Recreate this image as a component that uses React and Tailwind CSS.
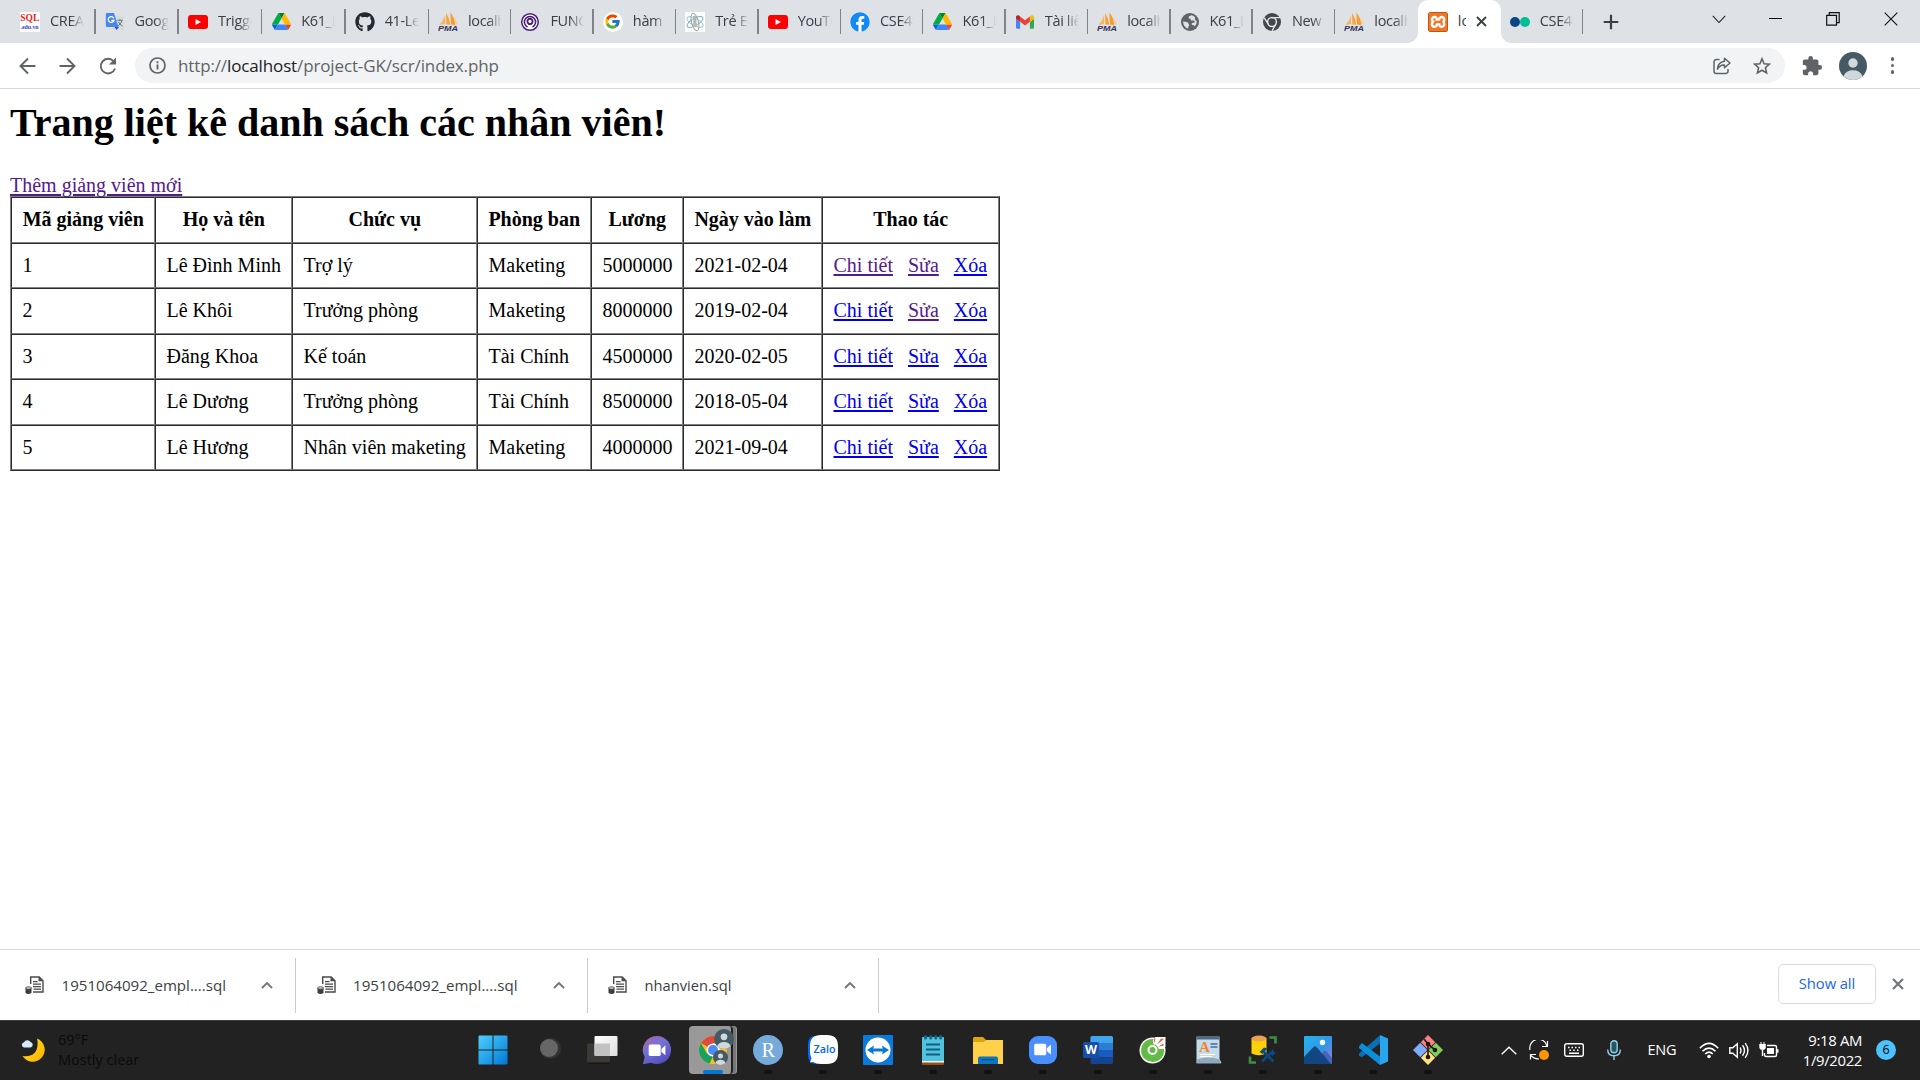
import React from "react";
import { FaYoutube, FaGithub, FaFacebook } from "react-icons/fa";
import { FcGoogle } from "react-icons/fc";
import { SiXampp } from "react-icons/si";

const Drive = () => (
  <svg className="h-[17px] w-[19px]" viewBox="0 0 87.3 78">
    <path d="m6.6 66.85 3.85 6.65c.8 1.4 1.95 2.5 3.3 3.3l13.75-23.8h-27.5c0 1.55.4 3.1 1.2 4.5z" fill="#0066da" />
    <path d="m43.65 25-13.75-23.8c-1.35.8-2.5 1.9-3.3 3.3l-25.4 44a9.06 9.06 0 0 0 -1.2 4.5h27.5z" fill="#00ac47" />
    <path d="m73.55 76.8c1.35-.8 2.5-1.9 3.3-3.3l1.6-2.75 7.65-13.25c.8-1.4 1.2-2.95 1.2-4.5h-27.5l5.85 11.5z" fill="#ea4335" />
    <path d="m43.65 25 13.75-23.8c-1.35-.8-2.9-1.2-4.5-1.2h-18.5c-1.6 0-3.15.45-4.5 1.2z" fill="#00832d" />
    <path d="m59.8 53h-32.3l-13.75 23.8c1.35.8 2.9 1.2 4.5 1.2h50.8c1.6 0 3.15-.45 4.5-1.2z" fill="#4285f4" />
    <path d="m73.4 26.5-12.7-22c-.8-1.4-1.95-2.5-3.3-3.3l-13.75 23.8 16.15 28h27.45c0-1.55-.4-3.1-1.2-4.5z" fill="#ffba00" />
  </svg>
);

const Youtube = () => (
  <span className="relative flex h-[14px] w-5 items-center justify-center rounded-[3px] bg-[#ff0000]">
    <svg className="h-[6px] w-[6px]" viewBox="0 0 6 6"><path d="M.5 0 6 3 .5 6z" fill="#fff" /></svg>
  </span>
);

const Pma = () => (
  <svg className="h-5 w-5" viewBox="0 0 20 20">
    <path d="M7 2.500Q6 8 1.500 13l5.700-1z" fill="#fbb45c" />
    <path d="M8 .8Q11.500 6 12.200 12.800l-3.700-.3z" fill="#f9a133" />
    <path d="M12.300.5Q17 6 17.200 13.200l-4.200-.6z" fill="#f89b2b" />
    <path d="M15.500 4.500q3 4 4 7.500l-1.700.8z" fill="#fbc98a" />
    <text x="0" y="19.400" textLength="20" lengthAdjust="spacingAndGlyphs" fontFamily="Liberation Sans" fontStyle="italic" fontWeight="700" fontSize="7.600" fill="#34345e">PMA</text>
  </svg>
);

const SqlFav = () => (
  <span className="flex h-5 w-5 flex-col items-center overflow-hidden bg-white">
    <svg className="h-5 w-5" viewBox="0 0 20 20">
      <text x="0.3" y="9" textLength="19" lengthAdjust="spacingAndGlyphs" fontFamily="Liberation Serif" fontWeight="700" fontSize="10" fill="#ec1c24">SQL</text>
      <text x="0.5" y="16.500" textLength="18" lengthAdjust="spacingAndGlyphs" fontFamily="Liberation Serif" fontWeight="700" fontSize="6" fill="#3b3bd0">.edu.vn</text>
    </svg>
  </span>
);

const Translate = () => (
  <svg className="h-5 w-5" viewBox="0 0 20 20">
    <rect x="7.500" y="4" width="11.500" height="14" rx="1" fill="#d9dadb" />
    <path d="M9.500 15h4.500l-2.500 3z" fill="#1f57c3" />
    <path d="M2 1h7l4.500 14H2a1.200 1.200 0 0 1-1.200-1.200V2.200A1.200 1.200 0 0 1 2 1z" fill="#4688f1" />
    <path d="M8.800 6.200A2.900 2.900 0 1 0 9 8.300H6.400" fill="none" stroke="#fff" strokeWidth="1.300" />
    <path d="M12.300 8.300h5.500M15 7v1.300M17 8.500q-1 3.500-4 5.500M13.300 9.800q1.500 3 4.200 4.300" fill="none" stroke="#607988" strokeWidth="1" />
  </svg>
);

const Func = () => (
  <svg className="h-5 w-5" viewBox="0 0 20 20" fill="none">
    <circle cx="10" cy="10" r="9" fill="#fff" />
    <circle cx="10" cy="10" r="8.300" stroke="#4b1e78" strokeWidth="1.500" />
    <path d="M7.500 15a5.600 5.600 0 1 1 5 0" stroke="#4b1e78" strokeWidth="1.500" />
    <path d="M9 13v-1.300a2.600 2.600 0 1 1 2 0V13" stroke="#4b1e78" strokeWidth="1.900" />
  </svg>
);

const Atom = () => (
  <svg className="h-5 w-5 bg-white" viewBox="0 0 20 20" fill="none">
    <ellipse cx="10" cy="10" rx="9" ry="3.600" stroke="#9fc3cb" transform="rotate(28 10 10)" />
    <ellipse cx="10" cy="10" rx="9" ry="3.600" stroke="#7fb0bd" transform="rotate(-30 10 10)" />
    <ellipse cx="10" cy="10" rx="9" ry="3.400" stroke="#8fa9b0" transform="rotate(75 10 10)" />
    <path d="M8 4h3l1 11H8.500z" fill="#b9b6b2" />
  </svg>
);

const Gmail = () => (
  <svg className="h-[14px] w-[18px]" viewBox="52 42 88 66">
    <path fill="#4285f4" d="M58 108h14V74L52 59v43c0 3.32 2.69 6 6 6" />
    <path fill="#34a853" d="M120 108h14c3.32 0 6-2.69 6-6V59l-20 15" />
    <path fill="#fbbc04" d="M120 48v26l20-15v-8c0-7.42-8.47-11.65-14.4-7.2" />
    <path fill="#ea4335" d="M72 74V48l24 18 24-18v26L96 92" />
    <path fill="#c5221f" d="M52 51v8l20 15V48l-5.6-4.2c-5.94-4.45-14.4-.22-14.4 7.2" />
  </svg>
);

const Globe = () => (
  <svg className="h-[18px] w-[18px]" viewBox="0 0 18 18">
    <circle cx="9" cy="9" r="9" fill="#5f6368" />
    <path d="M2.2 8.2 7 9.6l1.3 2.7-1 1.2v2.3A7 7 0 0 1 2.2 8.200z" fill="#dee1e6" />
    <path d="M10.500 2.300 8 3.200l-.6 2 2 .5.6 1.900h2.700l1.200 1.200-.9 1-2.300.3.2 1.800 2.300.3.300 1.500A7 7 0 0 0 15.800 8l-1.300-.6-.7-2 .5-.8a7 7 0 0 0-3.800-2.300z" fill="#dee1e6" />
  </svg>
);

const ChromeMono = () => (
  <svg className="h-[18px] w-[18px]" viewBox="0 0 18 18">
    <circle cx="9" cy="9" r="9" fill="#43474b" />
    <circle cx="9" cy="9" r="4.400" fill="none" stroke="#dee1e6" strokeWidth="1.500" />
    <path d="M9 4.600H17M5.200 11.200 1.300 4.800M12.800 11.200 9 18" stroke="#dee1e6" strokeWidth="1.400" />
  </svg>
);

const Xampp = () => (
  <span className="flex h-5 w-5 items-center justify-center overflow-hidden rounded-[2px] border border-[#b85a14] bg-white">
    <SiXampp className="h-5 w-5 shrink-0 text-[#f37623]" />
  </span>
);

const TwoDots = () => (
  <span className="flex w-5"><i className="h-[10px] w-[10px] rounded-full bg-[#0a4586]" /><i className="h-[10px] w-[10px] rounded-full bg-[#00bf96]" /></span>
);

const GoogleFav = () => (
  <span className="flex h-5 w-5 items-center justify-center rounded-full bg-white"><FcGoogle className="h-[17px] w-[17px]" /></span>
);
const Github = () => <FaGithub className="h-5 w-5 text-[#24292f]" />;
const Facebook = () => (
  <span className="flex h-5 w-5 rounded-full bg-white"><FaFacebook className="h-5 w-5 text-[#1289f4]" /></span>
);

const tabs = [
  [SqlFav, "CREAT"], [Translate, "Goog"], [Youtube, "Trigge"], [Drive, "K61_D"], [Github, "41-Le"],
  [Pma, "localh"], [Func, "FUNC"], [GoogleFav, "hàm"], [Atom, "Trẻ Em"], [Youtube, "YouTu"],
  [Facebook, "CSE48"], [Drive, "K61_D"], [Gmail, "Tài liệ"], [Pma, "localh"], [Globe, "K61_D"],
  [ChromeMono, "New"], [Pma, "localh"],
];

const FADE = "w-[34px] overflow-hidden whitespace-nowrap text-[14.500px] tracking-[-0.350px] text-[#3c4043] [mask-image:linear-gradient(90deg,#000_60%,transparent)]";

function Tab({ Icon, label, width = "w-[82.400px]", line = true }) {
  return (
    <div className={`flex h-full shrink-0 items-center ${width}`}>
      <span className="ml-[9px] flex w-5 shrink-0 justify-center"><Icon /></span>
      <span className={`ml-[10px] pb-[2px] ${FADE}`}>{label}</span>
      {line && <i className="ml-auto h-[25px] w-[1.500px] bg-[#808387]" />}
    </div>
  );
}

function TabBar() {
  return (
    <div className="flex h-[43px] shrink-0 items-center bg-[#dee1e6] pl-[11px]">
      {tabs.map(([Icon, label], i) => (
        <Tab key={i} Icon={Icon} label={label} width={i === 0 ? "w-[84.500px]" : i < 5 ? "w-[83.400px]" : "w-[82.400px]"} line={i !== 16} />
      ))}
      <div className="relative flex h-full w-[83px] shrink-0 items-center rounded-t-[10px] bg-white pl-[10px]">
        <i className="absolute bottom-0 -left-[10px] h-[10px] w-[10px] bg-[radial-gradient(circle_at_0_0,transparent_9.500px,white_10px)]" />
        <i className="absolute -right-[10px] bottom-0 h-[10px] w-[10px] bg-[radial-gradient(circle_at_100%_0,transparent_9.500px,white_10px)]" />
        <Xampp />
        <span className="ml-[10px] w-[8px] overflow-hidden pb-[2px] text-[14.500px] text-[#3c4043]">lo</span>
        <svg className="ml-[10px] h-[11px] w-[11px]" viewBox="0 0 11 11"><path d="m1 1 9 9m0-9-9 9" stroke="#3c4043" strokeWidth="1.900" /></svg>
      </div>
      <Tab Icon={TwoDots} label="CSE48" />
      <svg className="ml-[20px] h-4 w-4" viewBox="0 0 16 16"><path d="M8 .7v14.600M.7 8h14.600" stroke="#3c4043" strokeWidth="2.200" /></svg>
      <div className="ml-auto flex items-center pb-[6px]">
        <svg className="mr-[43px] h-3 w-[14px]" viewBox="0 0 14 12" fill="none"><path d="m.8 2.800 6.200 6.700 6.200-6.700" stroke="#222" strokeWidth="1.100" /></svg>
        <i className="mr-[44px] h-px w-[13px] bg-black" />
        <svg className="mr-[44px] h-[14px] w-[14px]" viewBox="0 0 14 14" fill="none"><path d="M.7 3.300h9.800v9.900H.7zM3.300 3.300V.7h9.900v9.900h-2.600" stroke="#111" strokeWidth="1.200" /></svg>
        <svg className="mr-[22px] h-[14px] w-[14px]" viewBox="0 0 14 14"><path d="m.7.7 12.600 12.600m0-12.600L.7 13.300" stroke="#111" strokeWidth="1.100" /></svg>
      </div>
    </div>
  );
}

const Avatar = ({ className }) => (
  <svg className={className} viewBox="0 0 28 28">
    <circle cx="14" cy="14" r="14" fill="#455a64" />
    <circle cx="14" cy="11" r="4.700" fill="#cfd8dc" />
    <path d="M4.500 24.200Q7 18.300 14 18.300t9.500 5.900A14 14 0 0 1 4.500 24.200z" fill="#cfd8dc" />
  </svg>
);

function Toolbar() {
  return (
    <div className="flex h-[46px] shrink-0 items-center border-b border-[#d5d7da] bg-white pl-[17px]">
      <svg className="h-[22px] w-[22px]" viewBox="0 0 22 22" fill="none" stroke="#5f6368" strokeWidth="1.900"><path d="M18.500 11H4M11 3.500 3.500 11l7.500 7.500" /></svg>
      <svg className="ml-[18px] h-[22px] w-[22px]" viewBox="0 0 22 22" fill="none" stroke="#5f6368" strokeWidth="1.900"><path d="M2.500 11H17M10 3.500l7.500 7.500-7.500 7.500" /></svg>
      <svg className="ml-[18px] h-[22px] w-[22px]" viewBox="0 0 22 22"><path d="M16.500 6.200A7.300 7.300 0 1 0 18 13.500" fill="none" stroke="#5f6368" strokeWidth="1.900" /><path d="M19 2.500v7h-7z" fill="#5f6368" /></svg>
      <div className="ml-[16px] flex h-[35px] w-[1650px] items-center rounded-full bg-[#f1f3f4] pl-[14px]">
        <svg className="h-[17px] w-[17px]" viewBox="0 0 17 17"><circle cx="8.500" cy="8.500" r="7.500" fill="none" stroke="#5f6368" strokeWidth="1.700" /><path d="M8.500 7.600v5M8.500 4.300v1.900" stroke="#5f6368" strokeWidth="1.800" /></svg>
        <span className="ml-[12px] pt-px text-[17px] tracking-[-0.130px] text-[#5f6368]">http://<span className="text-[#202124]">localhost</span>/project-GK/scr/index.php</span>
        <svg className="mr-px ml-auto h-[18px] w-[18px]" viewBox="0 0 18 18" fill="none" stroke="#5f6368" strokeWidth="1.500"><path d="M6.500 2.500H3.300A2.300 2.300 0 0 0 1 4.800v9.400a2.300 2.300 0 0 0 2.300 2.300h9.400a2.300 2.300 0 0 0 2.300-2.300V12" /><path d="M11.500 1.300 17 6l-5.500 4.700V8q-4.700-.3-7 4.200.3-7 7-8z" strokeLinejoin="round" /></svg>
        <svg className="mr-[14px] ml-[21px] h-[18px] w-[18px]" viewBox="0 0 18 18" fill="none" stroke="#5f6368" strokeWidth="1.600"><path d="m9 1.800 2.100 4.900 5.300.5-4 3.500 1.200 5.200L9 13.200l-4.600 2.700 1.200-5.200-4-3.500 5.300-.5z" /></svg>
      </div>
      <svg className="ml-[16px] h-[22px] w-[22px]" viewBox="0 0 24 24" fill="#5f6368"><path d="M20.500 11H19V7c0-1.100-.9-2-2-2h-4V3.500a2.500 2.500 0 0 0-5 0V5H4c-1.100 0-1.990.9-1.990 2v3.800H3.500c1.490 0 2.700 1.210 2.700 2.700s-1.210 2.700-2.700 2.700H2V20c0 1.100.9 2 2 2h3.800v-1.500c0-1.490 1.210-2.700 2.700-2.700 1.490 0 2.700 1.210 2.700 2.700V22H17c1.100 0 2-.9 2-2v-4h1.500a2.500 2.500 0 0 0 0-5z" /></svg>
      <Avatar className="ml-[16px] h-7 w-7" />
      <span className="ml-[23.500px] flex flex-col gap-[3px]">
        {[0, 1, 2].map((i) => <i key={i} className="h-[3.500px] w-[3.500px] rounded-full bg-[#5f6368]" />)}
      </span>
    </div>
  );
}

const headers = ["Mã giảng viên", "Họ và tên", "Chức vụ", "Phòng ban", "Lương", "Ngày vào làm", "Thao tác"];
const rows = [
  ["1", "Lê Đình Minh", "Trợ lý", "Maketing", "5000000", "2021-02-04"],
  ["2", "Lê Khôi", "Trưởng phòng", "Maketing", "8000000", "2019-02-04"],
  ["3", "Đăng Khoa", "Kế toán", "Tài Chính", "4500000", "2020-02-05"],
  ["4", "Lê Dương", "Trưởng phòng", "Tài Chính", "8500000", "2018-05-04"],
  ["5", "Lê Hương", "Nhân viên maketing", "Maketing", "4000000", "2021-09-04"],
];
const CELL = "flex items-center border border-t-[#2c2c2c] border-r-[#808080] border-b-[#808080] border-l-[#2c2c2c] pb-[2px] pr-[10px] pl-[10.500px] whitespace-nowrap";

const Link = ({ visited, children }) => (
  <a className={visited ? "text-[#551a8b] underline decoration-2 underline-offset-[2px]" : "text-[#0000ee] underline decoration-2 underline-offset-[2px]"}>{children}</a>
);

function Page() {
  return (
    <main className="flex-1 overflow-hidden bg-white pl-[10px] font-['Liberation_Serif',serif] text-[20px] text-black">
      <h1 className="mt-[9px] h-[75px] text-[40px] leading-[50px] font-bold">Trang liệt kê danh sách các nhân viên!</h1>
      <div className="h-[23px] leading-[24px]"><Link visited>Thêm giảng viên mới</Link></div>
      <div className="grid w-[990px] grid-cols-[144px_137px_185px_114px_92px_139px_177px] grid-rows-[46px_45px_46px_45px_46px_45px] border border-t-[#808080] border-r-[#2c2c2c] border-b-[#2c2c2c] border-l-[#808080]">
        {headers.map((h) => <div key={h} className={`${CELL} justify-center font-bold`}>{h}</div>)}
        {rows.map((r, i) => (
          <React.Fragment key={i}>
            {r.map((c, j) => <div key={j} className={CELL}>{c}</div>)}
            <div className={`${CELL} gap-[15px]`}>
              <Link visited={i === 0}>Chi tiết</Link>
              <Link visited={i < 2}>Sửa</Link>
              <Link>Xóa</Link>
            </div>
          </React.Fragment>
        ))}
      </div>
    </main>
  );
}

const SqlFile = () => (
  <svg className="h-[19px] w-[19px]" viewBox="0 0 19 19">
    <path d="M5.700 8V1h8.500L18 4.800V16H8" fill="#fff" stroke="#4a4a4a" strokeWidth="1.400" />
    <path d="M13.500 1v4.200H18z" fill="#4a4a4a" />
    <path d="M8 5.700h4.500M8 8.200h8M8 10.700h8M8.500 13.200H16" stroke="#4a4a4a" strokeWidth="1.200" />
    <path d="M.5 12v5q3 2 6 0v-5z" fill="#3d3d3d" /><ellipse cx="3.500" cy="12" rx="3" ry="1.200" fill="#ddd" stroke="#3d3d3d" strokeWidth=".8" />
  </svg>
);

function Downloads() {
  return (
    <div className="flex h-[71px] shrink-0 items-center border-t border-[#d9dadc] bg-white pl-[4.500px]">
      {["1951064092_empl....sql", "1951064092_empl....sql", "nhanvien.sql"].map((n, i) => (
        <div key={i} className="flex h-[55px] w-[291.500px] items-center border-r border-[#c8cacd] pr-[22px] pl-[20.500px]">
          <SqlFile />
          <span className={i < 2 ? "ml-[17.500px] text-[15.100px] text-[#3c4043]" : "ml-[17.500px] text-[14.700px] text-[#3c4043]"}>{n}</span>
          <svg className="ml-auto h-2 w-3" viewBox="0 0 12 8" fill="none"><path d="m1 7 5-5 5 5" stroke="#72757a" strokeWidth="1.900" /></svg>
        </div>
      ))}
      <div className="mb-[2px] ml-auto flex h-[40px] w-[98px] items-center justify-center rounded-[5px] border border-[#dadce0] pb-px text-[14.800px] font-medium tracking-[-0.100px] text-[#1a68e8]">Show all</div>
      <svg className="mr-[16px] mb-[2px] ml-[16px] h-3 w-3" viewBox="0 0 12 12"><path d="m1 1 10 10m0-10L1 11" stroke="#72757a" strokeWidth="2.200" /></svg>
    </div>
  );
}

const A = "h-[30px] w-[30px] overflow-visible";
const Svg = ({ children }) => <svg className={A} viewBox="0 0 30 30">{children}</svg>;

const Cam = ({ fill = "#fff" }) => (
  <g fill={fill}><rect x="6.500" y="9.500" width="12" height="11.500" rx="1.500" /><path d="m19.200 14 4-3.700v10L19.200 17z" /></g>
);

const apps = [
  <Svg key="win"><defs><linearGradient id="w" x2="1" y2="1"><stop stopColor="#4dd0ff" /><stop offset="1" stopColor="#0078d4" /></linearGradient></defs><path d="M.5 1.500a1 1 0 0 1 1-1H14.500V14.500H.5zM15.500.5h13a1 1 0 0 1 1 1v13h-14zM.5 15.500h14v14h-13a1 1 0 0 1-1-1zM15.500 15.500h14v13a1 1 0 0 1-1 1h-13z" fill="url(#w)" /></Svg>,
  <Svg key="search"><circle cx="17.500" cy="13.500" r="10.500" fill="#333" /><circle cx="16" cy="13" r="9" fill="#666" /></Svg>,
  <Svg key="view"><defs><linearGradient id="tv" y2="1"><stop stopColor="#fff" /><stop offset="1" stopColor="#dedede" /></linearGradient></defs><rect y="9" width="22" height="19.500" rx="1" fill="#111" /><rect x="-1" y="8.500" width="23" height="19" rx="1" fill="#3a3936" /><rect x="6.500" y="1" width="23" height="20" rx="1" fill="url(#tv)" /><path d="M6.500 8.500H22V21H7.500a1 1 0 0 1-1-1z" fill="#c2c2c2" /></Svg>,
  <Svg key="chat"><defs><linearGradient id="ch" x2=".6" y2="1"><stop stopColor="#b0659b" /><stop offset=".45" stopColor="#7471d6" /><stop offset="1" stopColor="#5450c2" /></linearGradient></defs><g transform="translate(-.8 0)"><path d="M15 1a14 14 0 1 1-6 26.700L.7 29.300 2.500 22A14 14 0 0 1 15 1z" fill="url(#ch)" /><Cam /></g></Svg>,
  <span key="chrome" className="relative flex h-12 w-12 items-center">
    <i className="absolute inset-y-0 left-[5px] w-[43px] rounded-[4px] bg-[#777] shadow-[inset_-1px_0_0_#999]" />
    <i className="absolute inset-y-0 left-0 w-[44px] rounded-[4px] border-r-2 border-[#222] bg-[#999]" />
    <svg className="absolute left-[10px] h-[28px] w-[28px]" viewBox="0 0 28 28">
      <circle cx="14" cy="14" r="14" fill="#fbc116" />
      <path d="M14 14 1.900 7A14 14 0 0 1 26.100 7H14z" fill="#dd4b3e" />
      <path d="M1.900 7 8 17.500 14 20.500 10.500 27.600A14 14 0 0 1 1.900 7z" fill="#1ba15f" />
      <circle cx="14" cy="14" r="6.500" fill="#fff" /><circle cx="14" cy="14" r="5" fill="#4c8bf5" />
    </svg>
    <Avatar className="absolute top-[3px] left-[25px] h-5 w-5" />
    <Avatar className="absolute top-[24px] left-[24px] h-[15px] w-[15px]" />
    <i className="absolute bottom-0 left-[14px] h-[4px] w-5 rounded-full bg-[#0078d7]" />
  </span>,
  <Svg key="r"><circle cx="15" cy="15" r="15" fill="#75aadb" /><text x="8.500" y="21.500" textLength="13.500" lengthAdjust="spacingAndGlyphs" fontFamily="Liberation Serif" fontSize="20" fill="#fff">R</text></Svg>,
  <Svg key="zalo"><path d="M7 1h6L5 20l7 9H9Q0 29 0 20V10Q0 1 7 1z" fill="#0068ff" /><path d="M13 0h6q11 0 11 11v7q0 11-11 11h-6q-5 0-8-2l-3 .5 1.500-4Q2 20 2 17v-6Q2 0 13 0z" fill="#fff" /><text x="5.500" y="17.500" textLength="22" lengthAdjust="spacingAndGlyphs" fontFamily="Open Sans" fontWeight="600" fontSize="10.500" fill="#0068e8">Zalo</text></Svg>,
  <Svg key="tv"><rect width="30" height="30" rx="1" fill="#0a7bdc" /><circle cx="15" cy="15" r="12.500" fill="#fff" /><path d="m4 15 7-4.500-.8 3h9.600l-.8-3 7 4.500-7 4.500.8-3h-9.600l.8 3z" fill="#0878d6" /></Svg>,
  <Svg key="note"><rect x="4" y="2" width="22" height="28" rx="1" fill="#9c500f" /><rect x="4" y="24" width="22" height="3.500" fill="#f3f3f3" /><rect x="4" y="2" width="22" height="24" rx="1" fill="#52c3df" /><path d="M8 9.500h14M8 14.500h14M8 19.500h14" stroke="#115e82" strokeWidth="1.800" />{[7.5, 12.7, 17.8, 22.7].map((x) => <rect key={x} x={x - 1.5} y="0" width="3" height="4.500" rx="1.500" fill="#11698a" />)}</Svg>,
  <Svg key="exp"><path d="M0 3.500a1.500 1.500 0 0 1 1.500-1.500H10l3 3h15.500A1.500 1.500 0 0 1 30 6.500V9H0z" fill="#e4a208" /><path d="M0 7h10.500l3-2H30v24H0z" fill="#ffd04a" /><path d="M5 29v-5.500a2 2 0 0 1 2-2h16a2 2 0 0 1 2 2V29z" fill="#0d74bd" /><path d="M8.500 24.700h13" stroke="#074b85" /></Svg>,
  <Svg key="zoom"><rect x="1" y="1" width="28" height="28" rx="9" fill="#4a8fff" /><g transform="translate(-.3 -.8)"><Cam /></g></Svg>,
  <Svg key="word"><rect x="7.500" y="1" width="22.500" height="28" rx="1.500" fill="#134391" /><path d="M7.500 22V15H30v7z" fill="#185abd" /><path d="M7.500 15V8H30v7z" fill="#2b7cd3" /><path d="M7.500 8V2.500A1.500 1.500 0 0 1 9 1h19.500A1.500 1.500 0 0 1 30 2.500V8z" fill="#41a5ee" /><rect y="7" width="16" height="16" rx="1.500" fill="#174ea8" /><text x="2" y="19" textLength="12" lengthAdjust="spacingAndGlyphs" fontFamily="Open Sans" fontWeight="700" fontSize="11.500" fill="#fff">W</text></Svg>,
  <Svg key="coc"><circle cx="14.500" cy="15.500" r="13" fill="#fff" /><path d="M17 2h10.500v10H20z" fill="#fff" /><path d="M15 4A11.500 11.500 0 1 0 26 14h-5.500A6 6 0 1 1 15 9.500z" fill="#62bb46" /><circle cx="14.500" cy="15.500" r="6.500" fill="#62bb46" /><circle cx="14.500" cy="15" r="4" fill="#62bb46" stroke="#fff" strokeWidth="2" /><path d="m16.500 8-1-4 2-.5zM19 9.500l4-6 3 .5zM20.500 11.500l5-3v2.200z" fill="#ef5a43" /></Svg>,
  <Svg key="pad"><path d="M3.500 2h23v22l2 4H3.500z" fill="#c6dbea" /><path d="M3.500 1h23v3.500h-23z" fill="#536a80" /><path d="M4 24.500q11-4 22.500 0l1.500 4H3.500z" fill="#91a9bc" /><text x="6" y="17" textLength="11" lengthAdjust="spacingAndGlyphs" fontFamily="Liberation Serif" fontWeight="700" fontSize="15" fill="#ed8836">A</text><path d="M17.500 9h7M17.500 12h7" stroke="#3b6ea8" strokeWidth="1.500" /><path d="M7 19.500h15M7 21.500h12" stroke="#fff" /></Svg>,
  <Svg key="sql"><path d="M3.500 3.500v15q7 3.500 15 0v-15z" fill="#fdd008" /><ellipse cx="11" cy="3.500" rx="7.500" ry="3" fill="#e9a355" /><path d="M21.500 2.500h6v6M2 21.500v6h6" stroke="#3d9144" strokeWidth="2.600" fill="none" /><path d="m14 26.500 9-9M25.500 26.500 15 16" stroke="#0b4a85" strokeWidth="2.600" /><path d="m11.500 17 4.500-4.500 3.500 1-5 5.500zM21 18l4-4 1 3 2 .5-3.500 3.500z" fill="#0b4a85" /></Svg>,
  <Svg key="photo"><defs><linearGradient id="ph" x2="1" y2="1"><stop stopColor="#25b4ef" /><stop offset=".55" stopColor="#3296e3" /><stop offset="1" stopColor="#9a7bd8" /></linearGradient></defs><rect x="1" y="1" width="28" height="28" rx="1" fill="url(#ph)" /><path d="m12 29 8.500-12.500q1.500-1.500 3 0L29 23v6z" fill="#4b62b9" /><path d="M1 22 10.500 12q1.500-1.500 3 0L28 29H1z" fill="#114682" /><circle cx="19.500" cy="7.500" r="2.700" fill="#fff" /></Svg>,
  <Svg key="code"><path d="m22 0 8 3.500v23L22 30z" fill="#27a5ed" /><path d="M1 18.500 22 .2V8.500L3.800 22.300 1 20.700z" fill="#0a6fb5" /><path d="M1 11.500 3.800 8 22 21.500V30L1 13z" fill="#0b8fdb" /></Svg>,
  <Svg key="git"><path d="m15 0 7.200 7.200L15 14.400 7.800 7.200z" fill="#ff8080" /><path d="m22.800 7.800L30 15l-7.200 7.200L15.600 15z" fill="#84cd5b" /><path d="m15 15.600 7.200 7.200L15 30l-7.200-7.200z" fill="#ffe085" /><path d="m7.200 7.800L14.400 15l-7.200 7.200L0 15z" fill="#7fadfa" /><path d="M15 22V9L11 4M15 9l7 6" stroke="#222" strokeWidth="1.700" fill="none" /><g fill="#181818"><circle cx="15" cy="9" r="2.300" /><circle cx="15" cy="22" r="2.300" /><circle cx="22" cy="15" r="2.300" /></g></Svg>,
];

function Tray() {
  const s = { fill: "none", stroke: "#fff", strokeWidth: 1.4 };
  return (
    <div className="ml-auto flex h-full items-center pb-px text-white">
      <svg className="h-[9px] w-4" viewBox="0 0 16 9" {...s}><path d="m.7 8.300 7.300-7 7.300 7" /></svg>
      <svg className="ml-[12px] h-5 w-5" viewBox="0 0 20 20" {...s}><path d="M1 10A8.500 8.500 0 0 1 18 6M18.500 1v5.500H13M1.500 19.500v-5H7M2 15.500Q5 19 10 19" strokeWidth="1.200" /><circle cx="15" cy="15" r="5" fill="#ff9500" stroke="none" /></svg>
      <svg className="ml-[15px] h-[14px] w-5" viewBox="0 0 20 14" {...s}><rect x=".7" y=".7" width="18.600" height="12.600" rx="2" /><path d="M4 4.500h1.500M7.500 4.500H9M11 4.500h1.500M14.500 4.500H16M5.500 7.200H7M9.200 7.200h1.500M13 7.200h1.500M5 10.200h10" /></svg>
      <svg className="ml-[23px] h-5 w-[14px]" viewBox="0 0 14 20" fill="none" stroke="#8fd3e8" strokeWidth="1.400"><rect x="3.800" y=".7" width="6.400" height="12" rx="3.200" fill="#255563" /><path d="M.7 9.500q0 6.300 6.300 6.300t6.300-6.300M7 16v4" /></svg>
      <span className="ml-[26.500px] w-[29.500px] text-[14.500px] tracking-[-0.200px] whitespace-nowrap">ENG</span>
      <svg className="ml-[22px] h-[17px] w-5" viewBox="0 0 20 17" {...s} strokeWidth="1.600"><path d="M.8 6.300Q10-3.500 19.200 6.300M3.500 9.300q6.500-6.500 13 0M6.200 12q3.800-3.800 7.600 0" /><circle cx="10" cy="14.500" r="1.800" fill="#fff" stroke="none" /></svg>
      <svg className="ml-[10px] h-[17px] w-5" viewBox="0 0 20 17" {...s}><path d="M.8 5.700v5.500h3l4.500 4V1.800l-4.500 3.900zM11 5.500q2 3 0 6M13.500 3.300q4 5.200 0 10.400M16.200 1.200q5.500 7.300 0 14.600" /></svg>
      <svg className="ml-[10px] h-4 w-5" viewBox="0 0 20 16" {...s}><path d="M8 3.500h8a1.500 1.500 0 0 1 1.500 1.500v8a1.500 1.500 0 0 1-1.500 1.500H7A1.500 1.500 0 0 1 5.500 13v-2M3.500 7v7" /><path d="M8 6h7v6H8zM18 7.200h1.500v3.500H18zM.3 2h6.500v3q0 3-3.200 3T.3 5zM1.500 0h1v2h-1zM4.500 0h1v2h-1z" fill="#fff" stroke="none" /></svg>
      <div className="ml-[18px] flex w-[65px] flex-col items-end pb-px text-[14.900px] leading-5 tracking-[-0.350px] whitespace-nowrap"><span>9:18 AM</span><span>1/9/2022</span></div>
      <span className="mr-[24px] ml-[14px] flex h-5 w-5 items-center justify-center rounded-full bg-[#4cc2ff] text-[12.500px] text-black">6</span>
    </div>
  );
}

function Taskbar() {
  return (
    <div className="flex h-[60px] shrink-0 border-t border-[#3c3e3d] bg-[#222222]">
      <div className="flex w-[465.500px] items-center pb-px pl-[21px]">
        <svg className="h-6 w-[26px]" viewBox="0 0 26 24">
          <defs><linearGradient id="mo" y2="1"><stop stopColor="#ffe21a" /><stop offset="1" stopColor="#ffb000" /></linearGradient></defs>
          <path d="M16 .5A12 12 0 1 1 1.500 18Q12 19.500 15.500 12 17.500 6 16 .5z" fill="url(#mo)" />
          <path d="M3 9.500a2.700 2.700 0 0 1 0-5.300A3.700 3.700 0 0 1 9.500 4a2.800 2.800 0 0 1 0 5.500z" fill="#d6e9f8" />
        </svg>
        <div className="ml-[11px] text-[14.500px] leading-5 text-[#0b0b0b]"><div>69°F</div><div>Mostly clear</div></div>
      </div>
      {apps.map((icon, i) => (
        <div key={i} className="relative flex h-full w-[55px] shrink-0 items-center justify-center pb-px">
          {icon}
          {i > 4 && <i className="absolute bottom-[6px] h-1 w-2 rounded-full bg-[#111]" />}
        </div>
      ))}
      <Tray />
    </div>
  );
}

export default function App() {
  return (
    <div className="flex h-[1080px] w-[1920px] flex-col overflow-hidden bg-white font-['Open_Sans','Noto_Sans',sans-serif]">
      <TabBar />
      <Toolbar />
      <Page />
      <Downloads />
      <Taskbar />
    </div>
  );
}
